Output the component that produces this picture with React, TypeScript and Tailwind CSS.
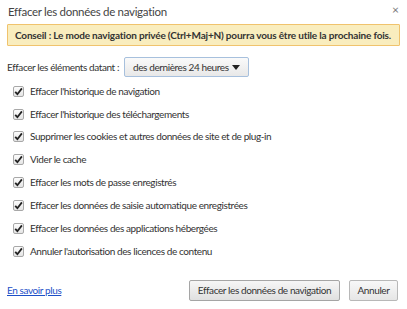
import React from "react";

const items = [
  "Effacer l'historique de navigation",
  "Effacer l'historique des téléchargements",
  "Supprimer les cookies et autres données de site et de plug-in",
  "Vider le cache",
  "Effacer les mots de passe enregistrés",
  "Effacer les données de saisie automatique enregistrées",
  "Effacer les données des applications hébergées",
  "Annuler l'autorisation des licences de contenu",
];

const Check = () => (
  <span className="flex h-[11px] w-[11px] shrink-0 items-center justify-center rounded-[2px] border border-[#a8a8a8] bg-gradient-to-b from-[#fdfdfd] to-[#e4e4e4]">
    <svg width="9" height="9" viewBox="0 0 9 9">
      <path d="M1.2 4.8 L3.4 7.2 L7.9 1.4" fill="none" stroke="#222" strokeWidth="1.8" />
    </svg>
  </span>
);

export default function App() {
  return (
    <div className="relative h-[309px] w-[407px] overflow-hidden whitespace-nowrap bg-white text-[10px] tracking-[-0.4px] text-[#333] font-['Lato',sans-serif]">
      <div className="flex items-start justify-between pl-[8px] pr-[8px] pt-[3px]">
        <h1 className="text-[11.5px] tracking-[-0.3px] text-[#444]">Effacer les données de navigation</h1>
        <span className="mt-[1px] text-[12px] leading-none tracking-normal text-[#777]">×</span>
      </div>
      <div className="mx-[7px] mt-[4px] flex h-[22px] items-center rounded-[1px] border border-[#f0c36d] bg-[#f9edbe] pl-[7px] text-[10px] font-bold tracking-[-0.18px] text-[#333]">
        Conseil : Le mode navigation privée (Ctrl+Maj+N) pourra vous être utile la prochaine fois.
      </div>
      <div className="mt-[11px] flex items-center gap-[5px] pl-[7px]">
        <span>Effacer les éléments datant :</span>
        <div className="flex h-[20px] w-[125px] items-center justify-between rounded-[2px] border border-[#a7c0dd] bg-gradient-to-b from-[#fafafa] to-[#e8e8e8] pl-[8px] pr-[8px]">
          <span>des dernières 24 heures</span>
          <svg width="8" height="5" viewBox="0 0 8 5">
            <path d="M0 0 L8 0 L4 5 Z" fill="#222" />
          </svg>
        </div>
      </div>
      <div className="mt-[6px] flex flex-col gap-[6.85px] pl-[13px]">
        {items.map((t) => (
          <label key={t} className="flex h-[16px] items-center gap-[6px]">
            <Check />
            <span>{t}</span>
          </label>
        ))}
      </div>
      <div className="mt-[21px] flex items-center justify-between pl-[7px] pr-[9px]">
        <a className="text-[#1c4fc7] underline">En savoir plus</a>
        <div className="flex gap-[9px]">
          <button className="h-[21px] w-[151px] rounded-[2px] border border-[#a5a5a5] bg-gradient-to-b from-[#f6f6f6] to-[#e0e0e0] text-[#333]">
            Effacer les données de navigation
          </button>
          <button className="h-[21px] w-[49px] rounded-[2px] border border-[#b8b8b8] bg-gradient-to-b from-[#f8f8f8] to-[#e6e6e6] text-[#333]">
            Annuler
          </button>
        </div>
      </div>
    </div>
  );
}
